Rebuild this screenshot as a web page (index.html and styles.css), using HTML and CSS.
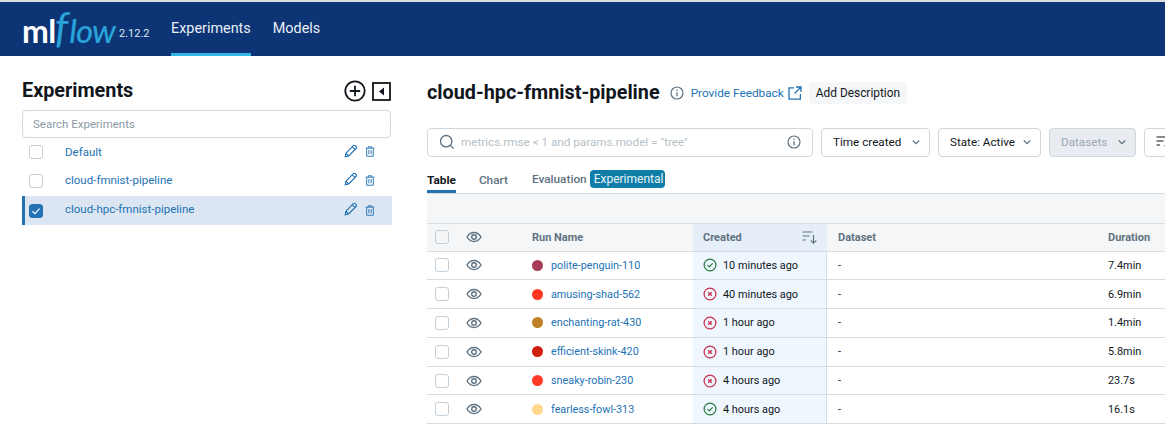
FILE: index.html
```html
<!DOCTYPE html>
<html lang="en">
<head>
<meta charset="utf-8">
<title>MLflow</title>
<link rel="stylesheet" href="styles.css">
</head>
<body>
<svg class="defs" width="0" height="0" aria-hidden="true">
  <defs>
    <symbol id="eye" viewBox="0 0 16 16"><path d="M1 8c1.800-3 4.200-4.500 7-4.500S13.200 5 15 8c-1.800 3-4.200 4.500-7 4.500S2.800 11 1 8z" fill="none" stroke="currentColor" stroke-width="1.400"/><circle cx="8" cy="8" r="2.300" fill="none" stroke="currentColor" stroke-width="1.400"/></symbol>
    <symbol id="ok" viewBox="0 0 14 14"><circle cx="7" cy="7" r="5.900" fill="none" stroke="currentColor" stroke-width="1.200"/><path d="M4.500 7.200l1.800 1.800 3.300-3.600" fill="none" stroke="currentColor" stroke-width="1.200"/></symbol>
    <symbol id="bad" viewBox="0 0 14 14"><circle cx="7" cy="7" r="5.900" fill="none" stroke="currentColor" stroke-width="1.200"/><path d="M5.200 5.200l3.600 3.600M8.800 5.200l-3.600 3.600" fill="none" stroke="currentColor" stroke-width="1.300"/></symbol>
    <symbol id="pencil" viewBox="0 0 14 14"><path d="M1.200 12.800l.7-3.500 7.400-7.600a1.400 1.400 0 0 1 2 0l.8.800a1.400 1.400 0 0 1 0 2l-7.500 7.500zM8.300 2.800l2.900 2.900M1.900 9.300l2.800 2.700" fill="none" stroke="currentColor" stroke-width="1.100"/></symbol>
    <symbol id="trash" viewBox="0 0 12 14"><path d="M.8 3h10.400M4 3V1.300h4V3M2 3v9.700h8V3M4.600 5.300v5M7.400 5.300v5" fill="none" stroke="currentColor" stroke-width="1.100"/></symbol>
    <symbol id="info" viewBox="0 0 14 14"><circle cx="7" cy="7" r="6" fill="none" stroke="currentColor" stroke-width="1.200"/><path d="M7 6.200v4" stroke="currentColor" stroke-width="1.300"/><circle cx="7" cy="4.200" r=".8" fill="currentColor"/></symbol>
    <symbol id="chev" viewBox="0 0 10 10"><path d="M1.800 3.500L5 6.700l3.200-3.200" fill="none" stroke="currentColor" stroke-width="1.200"/></symbol>
    <symbol id="sort" viewBox="0 0 16 14"><path d="M.5 2h10M.5 6h7M.5 10h3.500" fill="none" stroke="currentColor" stroke-width="1.200"/><path d="M11.500 5v8M8.700 10.300l2.800 2.800 2.800-2.800" fill="none" stroke="currentColor" stroke-width="1.200"/></symbol>
  </defs>
</svg>

<header class="topbar">
  <div class="logo"><span class="logo-ml">ml</span><span class="logo-f">f</span><span class="logo-flow">low</span></div>
  <span class="version">2.12.2</span>
  <nav class="nav">
    <a class="nav-item nav-active">Experiments</a>
    <a class="nav-item">Models</a>
  </nav>
</header>

<div class="page">
  <aside class="sidebar">
    <div class="side-head">
      <h2 class="side-title">Experiments</h2>
      <svg class="icon-plus" width="22" height="22" viewBox="0 0 22 22"><circle cx="11" cy="11" r="9.700" fill="none" stroke="#11171c" stroke-width="1.800"/><path d="M11 5.800v10.400M5.800 11h10.400" stroke="#11171c" stroke-width="1.800"/></svg>
      <svg class="icon-collapse" width="19" height="19" viewBox="0 0 19 19"><rect x="1" y="1" width="17" height="17" fill="none" stroke="#11171c" stroke-width="1.800"/><path d="M12 5.500v8L7 9.500z" fill="#11171c"/></svg>
    </div>
    <div class="side-search">Search Experiments</div>
    <ul class="exp-list">
      <li class="exp-row"><span class="box"></span><a class="exp-name">Default</a><svg class="ic-pencil"><use href="#pencil"/></svg><svg class="ic-trash"><use href="#trash"/></svg></li>
      <li class="exp-row"><span class="box"></span><a class="exp-name">cloud-fmnist-pipeline</a><svg class="ic-pencil"><use href="#pencil"/></svg><svg class="ic-trash"><use href="#trash"/></svg></li>
      <li class="exp-row exp-selected"><span class="box box-on"><svg width="14" height="14" viewBox="0 0 14 14"><path d="M3.500 7.200l2.500 2.400 4.500-5" fill="none" stroke="#fff" stroke-width="1.200"/></svg></span><a class="exp-name">cloud-hpc-fmnist-pipeline</a><svg class="ic-pencil"><use href="#pencil"/></svg><svg class="ic-trash"><use href="#trash"/></svg></li>
    </ul>
  </aside>

  <main class="main">
    <div class="title-row">
      <h1 class="title">cloud-hpc-fmnist-pipeline</h1>
      <svg class="ic-info title-info"><use href="#info"/></svg>
      <a class="feedback">Provide Feedback</a>
      <svg class="ic-ext" width="14" height="14" viewBox="0 0 14 14"><path d="M6 1.800H1v11.400h11.400V8M8 1h5v5M13 1L6.500 7.500" fill="none" stroke="#2272b4" stroke-width="1.300"/></svg>
      <span class="add-desc">Add Description</span>
    </div>

    <div class="filters">
      <div class="run-search">
        <svg class="ic-search" width="16" height="16" viewBox="0 0 16 16"><circle cx="7.200" cy="7.200" r="5.700" fill="none" stroke="#5f7281" stroke-width="1.300"/><path d="M11.400 11.400l3.200 3.200" stroke="#5f7281" stroke-width="1.300"/></svg>
        <span class="run-placeholder">metrics.rmse &lt; 1 and params.model = "tree"</span>
        <svg class="ic-info"><use href="#info"/></svg>
      </div>
      <button class="select sel-time">Time created<svg class="ic-chev"><use href="#chev"/></svg></button>
      <button class="select sel-state">State: Active<svg class="ic-chev"><use href="#chev"/></svg></button>
      <button class="select sel-data">Datasets<svg class="ic-chev"><use href="#chev"/></svg></button>
      <button class="select sel-sort"><svg class="ic-sort"><use href="#sort"/></svg></button>
    </div>

    <div class="tabs">
      <span class="tab tab-active">Table</span>
      <span class="tab tab-chart">Chart</span>
      <span class="tab tab-eval">Evaluation</span>
      <span class="badge">Experimental</span>
    </div>

    <div class="band"></div>

    <div class="table">
      <div class="row row-head">
        <div class="cell"><span class="box box-head"></span></div>
        <div class="cell"><svg class="ic-eye"><use href="#eye"/></svg></div>
        <div class="cell cell-run">Run Name</div>
        <div class="cell cell-created">Created<svg class="ic-sort head-sort"><use href="#sort"/></svg></div>
        <div class="cell cell-dataset">Dataset</div>
        <div class="cell">Duration</div>
      </div>

      <div class="row">
        <div class="cell"><span class="box"></span></div>
        <div class="cell"><svg class="ic-eye"><use href="#eye"/></svg></div>
        <div class="cell cell-run"><span class="dot dot-1"></span><a class="run-link">polite-penguin-110</a></div>
        <div class="cell cell-created"><svg class="ic-status st-ok"><use href="#ok"/></svg>10 minutes ago</div>
        <div class="cell cell-dataset">-</div>
        <div class="cell">7.4min</div>
      </div>
      <div class="row">
        <div class="cell"><span class="box"></span></div>
        <div class="cell"><svg class="ic-eye"><use href="#eye"/></svg></div>
        <div class="cell cell-run"><span class="dot dot-2"></span><a class="run-link">amusing-shad-562</a></div>
        <div class="cell cell-created"><svg class="ic-status st-bad"><use href="#bad"/></svg>40 minutes ago</div>
        <div class="cell cell-dataset">-</div>
        <div class="cell">6.9min</div>
      </div>
      <div class="row">
        <div class="cell"><span class="box"></span></div>
        <div class="cell"><svg class="ic-eye"><use href="#eye"/></svg></div>
        <div class="cell cell-run"><span class="dot dot-3"></span><a class="run-link">enchanting-rat-430</a></div>
        <div class="cell cell-created"><svg class="ic-status st-bad"><use href="#bad"/></svg>1 hour ago</div>
        <div class="cell cell-dataset">-</div>
        <div class="cell">1.4min</div>
      </div>
      <div class="row">
        <div class="cell"><span class="box"></span></div>
        <div class="cell"><svg class="ic-eye"><use href="#eye"/></svg></div>
        <div class="cell cell-run"><span class="dot dot-4"></span><a class="run-link">efficient-skink-420</a></div>
        <div class="cell cell-created"><svg class="ic-status st-bad"><use href="#bad"/></svg>1 hour ago</div>
        <div class="cell cell-dataset">-</div>
        <div class="cell">5.8min</div>
      </div>
      <div class="row">
        <div class="cell"><span class="box"></span></div>
        <div class="cell"><svg class="ic-eye"><use href="#eye"/></svg></div>
        <div class="cell cell-run"><span class="dot dot-5"></span><a class="run-link">sneaky-robin-230</a></div>
        <div class="cell cell-created"><svg class="ic-status st-bad"><use href="#bad"/></svg>4 hours ago</div>
        <div class="cell cell-dataset">-</div>
        <div class="cell">23.7s</div>
      </div>
      <div class="row">
        <div class="cell"><span class="box"></span></div>
        <div class="cell"><svg class="ic-eye"><use href="#eye"/></svg></div>
        <div class="cell cell-run"><span class="dot dot-6"></span><a class="run-link">fearless-fowl-313</a></div>
        <div class="cell cell-created"><svg class="ic-status st-ok"><use href="#ok"/></svg>4 hours ago</div>
        <div class="cell cell-dataset">-</div>
        <div class="cell">16.1s</div>
      </div>
    </div>
  </main>
</div>
</body>
</html>
```
FILE: styles.css
```css
* { box-sizing: border-box; }
html, body { margin: 0; height: 100%; overflow: hidden; background: #fff; }
body { font-family: Roboto, "Liberation Sans", sans-serif; font-size: 11.5px; color: #11171c; }
.defs { position: absolute; }
ul { list-style: none; margin: 0; padding: 0; }
h1, h2 { margin: 0; }

.topbar { height: 56px; border-top: 2px solid #d9dde0; background: #0d3575; display: flex; align-items: stretch; padding-left: 22px; color: #fff; }
.logo { display: flex; align-items: baseline; width: 97px; padding-top: 9px; font-family: Lato, sans-serif; line-height: 32px; }
.logo-ml { font-size: 32px; font-weight: 700; letter-spacing: -.5px; color: #fff; }
.logo-f { font-size: 42px; font-style: italic; font-weight: 400; color: #2aa3da; margin: 0 1px 0 -1px; line-height: 32px; }
.logo-flow { font-size: 33px; font-style: italic; font-weight: 500; color: #2aa3da; letter-spacing: -.8px; }
.version { font-size: 11px; align-self: center; margin-top: 9px; width: 52px; color: #dfe6ef; }
.nav { display: flex; gap: 22px; }
.nav-item { font-size: 14.400px; line-height: 54px; height: 54px; color: #e8eef5; }
.nav-active { border-bottom: 3px solid #33b5e5; }

.page { display: flex; }
.sidebar { width: 427px; flex: none; padding: 19px 0 0 22px; }
.side-head { display: flex; align-items: center; width: 369px; height: 32px; }
.side-title { font-size: 19.800px; font-weight: 700; flex: 1; line-height: 32px; }
.icon-collapse { margin-left: 6px; }
.side-search { width: 369px; height: 28px; border: 1px solid #cfd8df; border-radius: 4px; line-height: 26px; padding-left: 10px; color: #8a9aa6; margin-top: 3px; }
.exp-list { width: 370px; }
.exp-row { display: flex; align-items: center; height: 28.500px; padding-left: 7px; }
.exp-selected { background: #dbe6f2; border-left: 3px solid #2272b4; padding-left: 4px; margin-top: 1px; height: 29px; }
.box { display: inline-block; width: 14px; height: 14px; border: 1px solid #c2ced8; border-radius: 3px; background: #fff; flex: none; }
.box-on { background: #2272b4; border-color: #2272b4; }
.box-on svg { display: block; margin: -1px; }
.box-head { background: #f5f6f7; }
.exp-name { color: #2272b4; margin-left: 22px; flex: 1; padding-bottom: 1px; }
.exp-selected .exp-name { padding-bottom: 4px; }
.ic-pencil { width: 14px; height: 14px; color: #2272b4; margin-top: -3px; margin-left: 1px; }
.ic-trash { width: 10px; height: 13px; color: #2272b4; margin: -1px 17px 0 7px; }

.main { flex: 1; min-width: 0; overflow: hidden; }
.title-row { display: flex; align-items: center; height: 36px; margin-top: 19px; }
.title { font-size: 19.800px; font-weight: 700; line-height: 36px; }
.ic-info { width: 14px; height: 14px; color: #5f7281; flex: none; }
.title-info { margin: 0 7px 0 10px; }
.feedback { color: #2272b4; font-size: 11.800px; }
.ic-ext { margin: 0 7px 0 4px; }
.add-desc { background: #f5f6f7; border-radius: 4px; height: 22px; line-height: 22px; padding: 0 7px; font-size: 11.900px; }

.filters { display: flex; gap: 8px; margin-top: 17px; height: 29px; }
.run-search { width: 386px; flex: none; border: 1px solid #cfd8df; border-radius: 4px; display: flex; align-items: center; padding: 0 11px 1px; }
.ic-search { flex: none; margin-right: 6px; }
.run-placeholder { flex: 1; color: #b5bfc7; font-size: 11.700px; }
.select { font: inherit; font-size: 11.700px; color: #11171c; background: #fff; border: 1px solid #cfd8df; border-radius: 4px; display: flex; flex: none; align-items: center; justify-content: space-between; padding: 0 8px 2px 11px; height: 29px; }
.ic-chev { width: 10px; height: 10px; color: #5f7281; }
.sel-time { width: 109px; }
.sel-state { width: 103px; }
.sel-data { width: 87px; background: #e8ecf0; color: #9aa8b4; }
.sel-sort { width: 60px; justify-content: flex-start; }
.ic-sort { width: 16px; height: 14px; }

.tabs { display: flex; align-items: flex-start; height: 23px; margin-top: 13px; font-weight: 500; color: #5f7281; }
.tab { font-size: 11.800px; line-height: 15px; padding-top: 2px; }
.tab-active { color: #11171c; font-weight: 700; height: 23px; padding-top: 3px; border-bottom: 3px solid #2272b4; }
.tab-chart { margin-left: 23px; padding-top: 3px; }
.tab-eval { margin-left: 24px; }
.badge { margin-left: 3px; background: #0e7ea8; color: #e6f4fa; border-radius: 4px; height: 18px; line-height: 18px; padding: 0 4px; font-weight: 400; font-size: 12px; width: 75px; }

.band { height: 30px; background: #f5f6f7; border-top: 1px solid #d5dce2; }
.row { display: grid; grid-template-columns: 34px 71px 161px 134px 281px 57px; height: 28.800px; border-bottom: 1px solid #d5dce2; align-items: stretch; font-size: 10.900px; }
.row-head { height: 28.500px; background: #f5f6f7; border-top: 1px solid #d5dce2; font-weight: 700; color: #5f7281; font-size: 11px; }
.cell { display: flex; align-items: center; }
.cell:first-child { padding-left: 8px; }
.ic-eye { width: 16px; height: 16px; color: #5f7281; margin-left: 5px; }
.cell-created { background: #eff6fd; padding-left: 10px; border-right: 1px solid #d5dce2; }
.row-head .cell-created { background: #e6eff9; justify-content: space-between; padding-right: 9px; border-right: 0; }
.cell-dataset { padding-left: 11px; }
.dot { width: 11px; height: 11px; border-radius: 50%; flex: none; margin-right: 8px; }
.dot-1 { background: #a83c58; }
.dot-2 { background: #ff3621; }
.dot-3 { background: #be8125; }
.dot-4 { background: #d0200d; }
.dot-5 { background: #ff3a28; }
.dot-6 { background: #ffd88c; }
.run-link { color: #2272b4; font-size: 10.800px; }
.ic-status { width: 14px; height: 14px; margin-right: 6px; flex: none; }
.st-ok { color: #277c43; }
.st-bad { color: #c82d4c; }
```
